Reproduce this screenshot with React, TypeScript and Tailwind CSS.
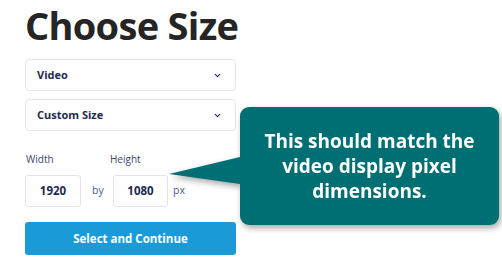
import { ChevronDown } from "lucide-react";

function SelectBox({ label }: { label: string }) {
  return (
    <div className="flex h-[32px] w-[211px] items-center justify-between rounded-[4px] border border-[#e3e5ea] bg-white pl-[11px] pr-[13px]">
      <span className="text-[11px] font-bold text-[#1d2a4d]">{label}</span>
      <ChevronDown className="h-[9px] w-[9px] text-[#1d2a4d]" strokeWidth={3} />
    </div>
  );
}

function NumBox({ value, w }: { value: string; w: string }) {
  return (
    <div
      className={`flex h-[32px] ${w} items-center justify-center rounded-[3px] border border-[#e3e5ea] bg-white text-[11.5px] font-bold text-[#1d2a4d]`}
    >
      {value}
    </div>
  );
}

export default function App() {
  return (
    <div
      className="relative h-[260px] w-[502px] overflow-hidden bg-white"
      style={{ fontFamily: "'Open Sans', sans-serif" }}
    >
      <div className="flex flex-col pl-[25px]">
        <h1 className="pt-[1px] text-[38px] font-bold leading-[48px] tracking-[-0.7px] text-[#252525]">
          Choose Size
        </h1>

        <div className="mt-[10px] flex flex-col gap-[8px]">
          <SelectBox label="Video" />
          <SelectBox label="Custom Size" />
        </div>

        <div className="mt-[21px] flex text-[10px] leading-[14px] text-[#3b4668]">
          <span className="w-[85px] pl-[1px]">Width</span>
          <span>Height</span>
        </div>

        <div className="mt-[9px] flex items-center text-[10.5px] text-[#4a5a8c]">
          <NumBox value="1920" w="w-[56px]" />
          <span className="ml-[11px] w-[21px]">by</span>
          <NumBox value="1080" w="w-[55px]" />
          <span className="ml-[5px]">px</span>
        </div>

        <button className="mt-[15px] flex h-[33px] w-[211px] items-center justify-center rounded-[3px] bg-[#1a9bd8] text-[11.5px] font-bold text-white">
          Select and Continue
        </button>
      </div>

      <div className="absolute left-[169px] top-[107px] [filter:drop-shadow(2px_3px_3px_rgba(0,0,0,0.35))]">
        <div className="flex">
          <svg width="71" height="118" viewBox="0 0 71 118" className="block">
            <polygon points="0,67 71,50 71,77" fill="#006f74" />
          </svg>
          <div className="flex h-[118px] w-[259px] items-center justify-center rounded-[9px] bg-[#006f74] px-[10px] text-center text-[19px] font-bold leading-[25px] text-white">
            This should match the
            <br />
            video display pixel
            <br />
            dimensions.
          </div>
        </div>
      </div>
    </div>
  );
}
